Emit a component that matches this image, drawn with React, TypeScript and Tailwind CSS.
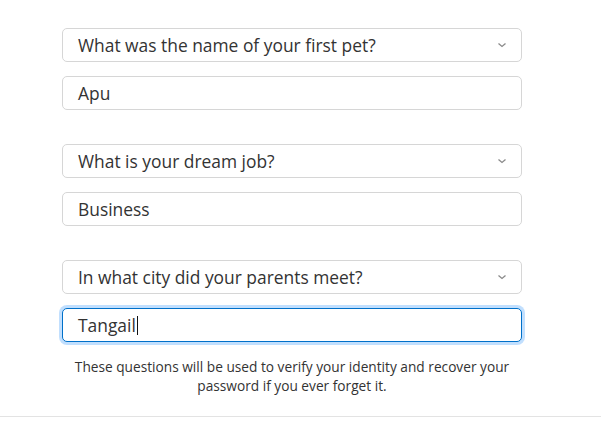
import React from "react";

function Chevron() {
  return (
    <svg width="10" height="6" viewBox="0 0 10 6" className="absolute right-[14px] top-[13px]">
      <path d="M1.5 1.5 L5 4.5 L8.5 1.5" fill="none" stroke="#8a8a8a" strokeWidth="1.3" />
    </svg>
  );
}

function Select({ label }: { label: string }) {
  return (
    <div className="relative h-[34px] w-[460px] rounded-[5px] border border-[#d6d6d6] bg-white flex items-center pl-[15px] text-[17.4px] text-[#333333]">
      {label}
      <Chevron />
    </div>
  );
}

function Input({ value, focused }: { value: string; focused?: boolean }) {
  return (
    <div
      className={
        focused
          ? "h-[34px] w-[460px] rounded-[5px] border border-[#0070c9] shadow-[0_0_0_3px_rgba(131,192,253,0.5)] bg-white flex items-center pl-[15px] text-[17.4px] text-[#333333]"
          : "h-[34px] w-[460px] rounded-[5px] border border-[#d6d6d6] bg-white flex items-center pl-[15px] text-[17.4px] text-[#333333]"
      }
    >
      {value}
      {focused && <span className="inline-block w-px h-[19px] bg-[#111] ml-[1px]" />}
    </div>
  );
}

export default function App() {
  const items = [
    { q: "What was the name of your first pet?", a: "Apu" },
    { q: "What is your dream job?", a: "Business" },
    { q: "In what city did your parents meet?", a: "Tangail", f: true },
  ];
  return (
    <div className="w-[601px] h-[421px] bg-white" style={{ fontFamily: '"Open Sans", Arial, sans-serif' }}>
      <div className="pl-[62px] pt-[28px] flex flex-col gap-[34px]">
        {items.map((it) => (
          <div key={it.q} className="flex flex-col gap-[14px]">
            <Select label={it.q} />
            <Input value={it.a} focused={it.f} />
          </div>
        ))}
      </div>
      <div className="w-[470px] ml-[57px] mt-[15px] text-center text-[13.7px] leading-[19px] text-[#333333]">
        These questions will be used to verify your identity and recover your password if you ever forget it.
      </div>
      <div className="mt-[21px] border-t border-[#e3e3e3]" />
    </div>
  );
}
